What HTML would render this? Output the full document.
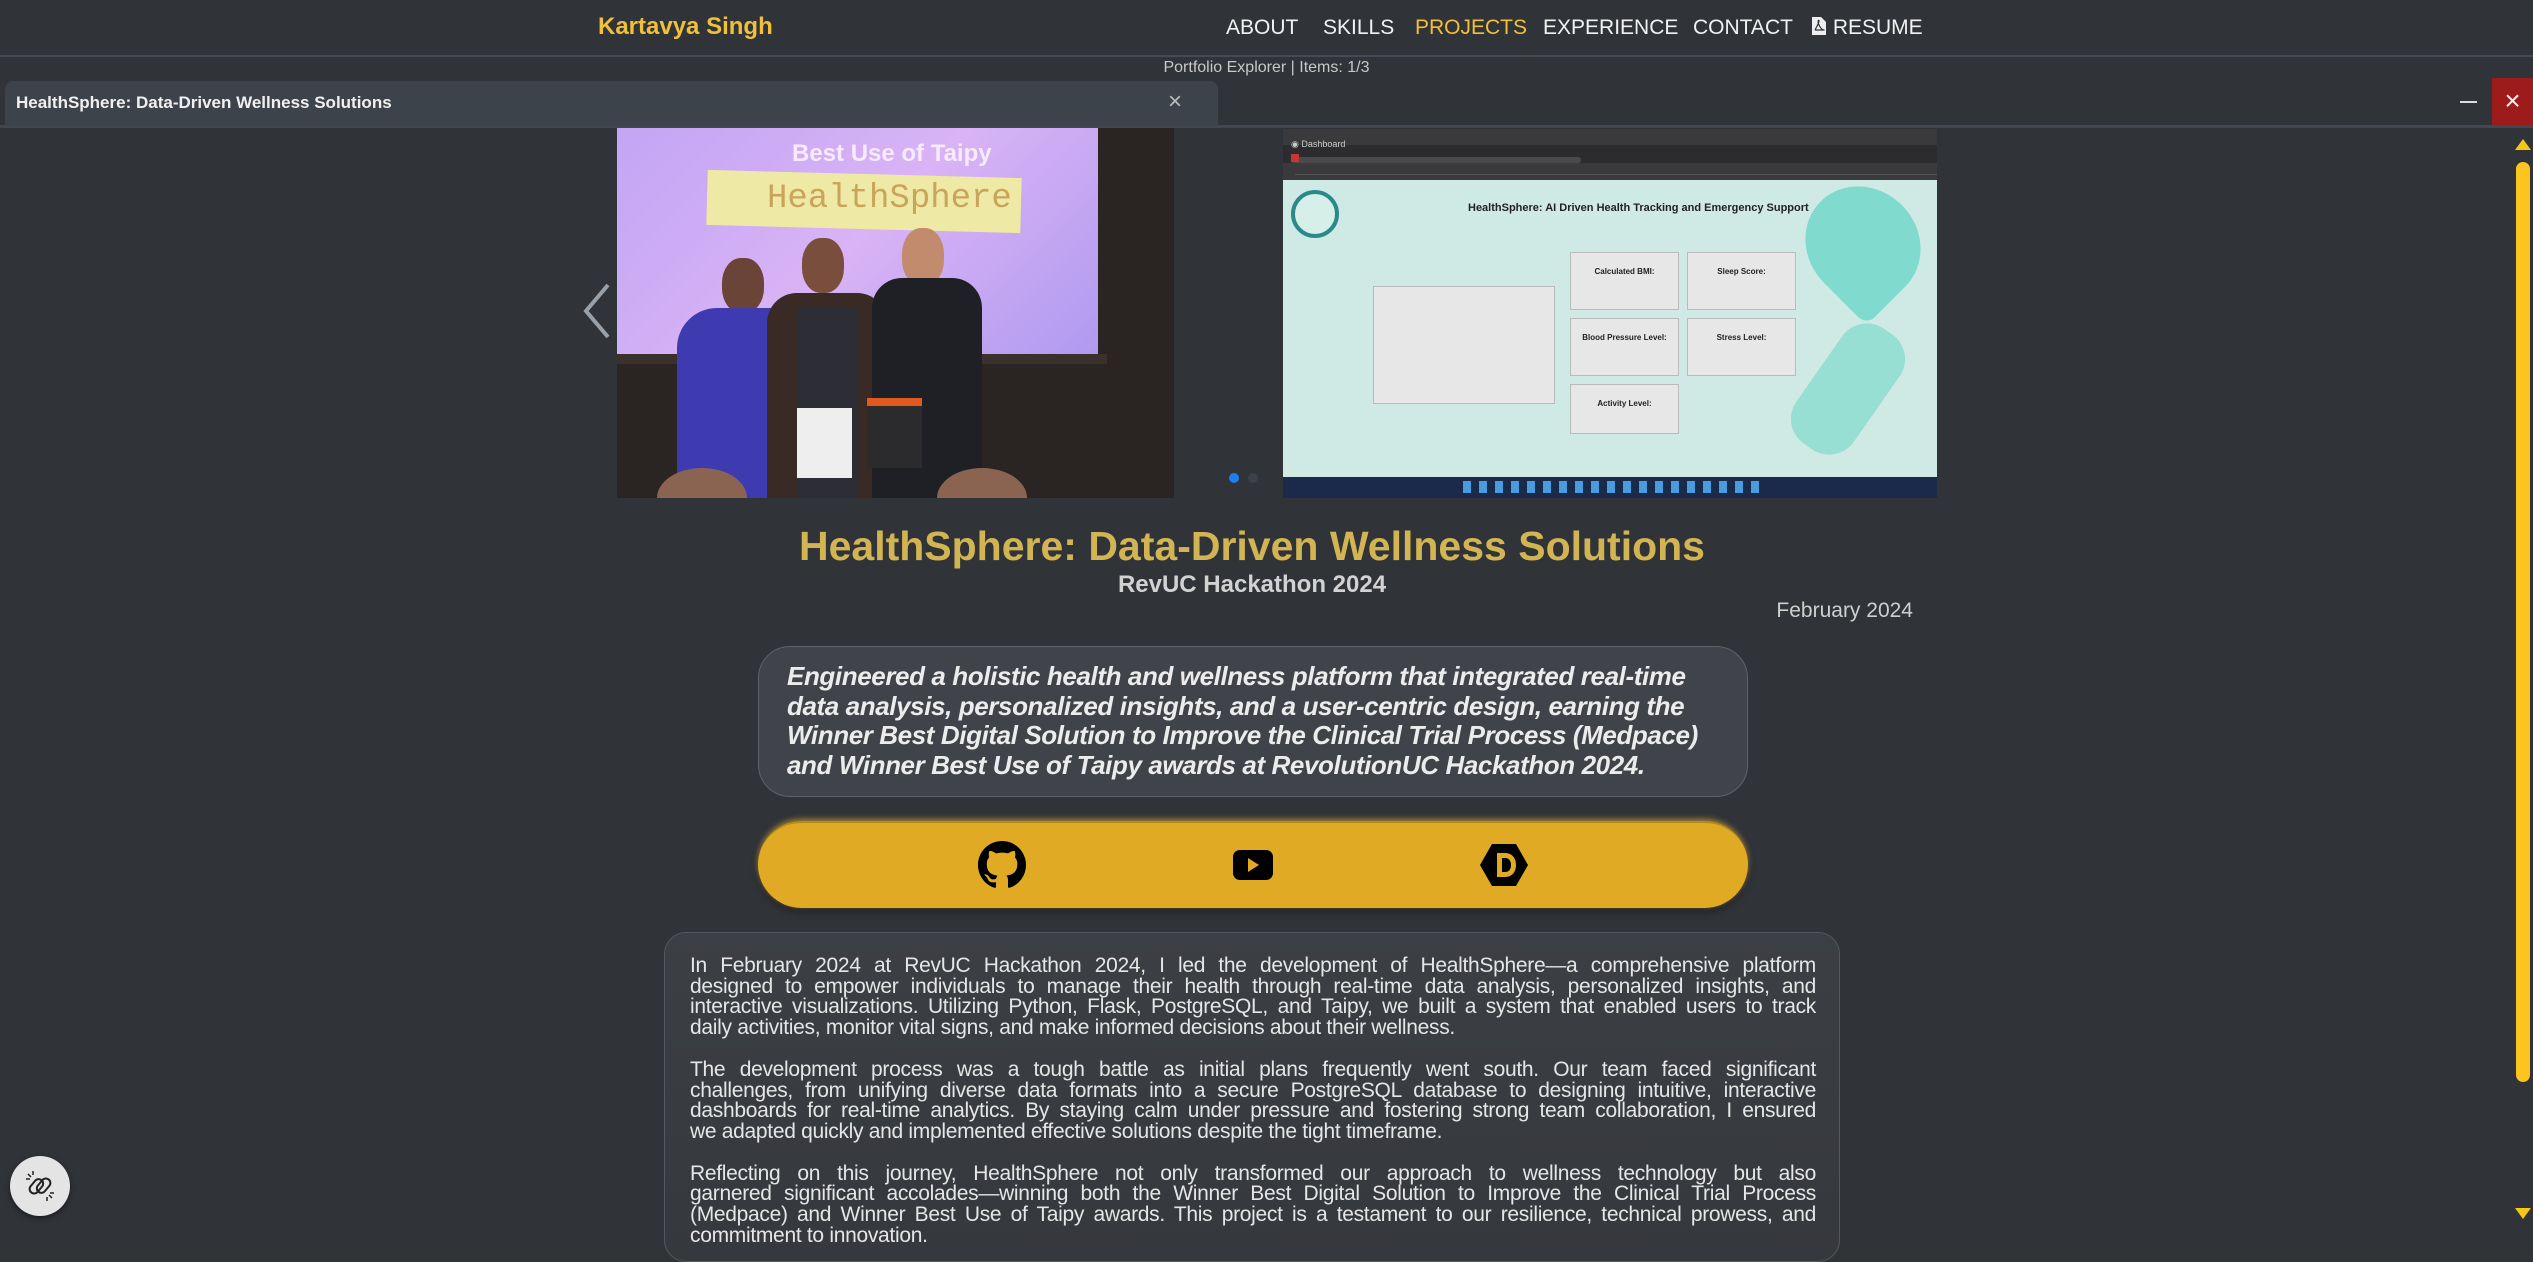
<!DOCTYPE html>
<html><head><meta charset="utf-8"><style>
*{margin:0;padding:0;box-sizing:border-box}
html,body{width:2533px;height:1231px;overflow:hidden;background:#303338;font-family:"Liberation Sans",sans-serif;color:#e8e8e8}
.abs{position:absolute}
.nav a{position:absolute;top:16px;font-size:21px;color:#f2f2f2;text-decoration:none;white-space:nowrap}
.ql{white-space:nowrap}
.desc div{white-space:nowrap;text-align:justify;text-align-last:justify}
.desc div.l{text-align-last:left}
</style></head><body>
<!-- navbar -->
<div class="abs" style="left:0;top:0;width:2533px;height:57px;background:#303338;border-bottom:2px solid #454a55"></div>
<div class="abs" style="left:598px;top:13px;font-size:24px;font-weight:bold;color:#f0c03a">Kartavya Singh</div>
<div class="nav">
<a style="left:1226px">ABOUT</a>
<a style="left:1323px">SKILLS</a>
<a style="left:1415px;color:#f0c03a">PROJECTS</a>
<a style="left:1543px">EXPERIENCE</a>
<a style="left:1693px">CONTACT</a>
<a style="left:1811px"><svg width="16" height="20" viewBox="0 0 16 20" style="vertical-align:-2px"><path d="M1 1h9l5 5v13H1z" fill="#eee"/><path d="M4 14c2-4 4-7 4-9s-2 0 0 4 4 5 5 5-6 0-9 0" stroke="#303338" stroke-width="1.2" fill="none"/></svg> RESUME</a>
</div>
<div class="abs" style="left:0;width:2533px;top:59px;text-align:center;font-size:16px;color:#c8c8c8">Portfolio Explorer | Items: 1/3</div>
<!-- tab bar -->
<div class="abs" style="left:0;top:125px;width:2533px;height:3px;background:#414751"></div>
<div class="abs" style="left:5px;top:81px;width:1213px;height:45px;background:#3d434b;border-radius:8px 8px 0 0"></div>
<div class="abs" style="left:16px;top:93px;font-size:17px;font-weight:bold;color:#f0f0f0">HealthSphere: Data-Driven Wellness Solutions</div>
<div class="abs" style="left:1168px;top:88px;font-size:24px;color:#bbb">×</div>
<div class="abs" style="left:2460px;top:101px;width:17px;height:2px;background:#ddd"></div>
<div class="abs" style="left:2492px;top:78px;width:41px;height:47px;background:#9e1b1b;color:#eee;font-size:28px;text-align:center;line-height:45px">×</div>
<!-- scrollbar -->
<div class="abs" style="left:2515px;top:139px;width:0;height:0;border-left:8px solid transparent;border-right:8px solid transparent;border-bottom:11px solid #f5c518"></div>
<div class="abs" style="left:2516px;top:162px;width:14px;height:920px;background:#fcc41e;border-radius:7px"></div>
<div class="abs" style="left:2515px;top:1208px;width:0;height:0;border-left:8px solid transparent;border-right:8px solid transparent;border-top:11px solid #f5c518"></div>
<!-- left photo -->
<div class="abs" style="left:617px;top:128px;width:557px;height:370px;background:#2a2422;overflow:hidden">
 <div class="abs" style="left:0;top:0;width:481px;height:226px;background:linear-gradient(135deg,#c2a5f5,#d9b3f5 50%,#b09af0)"></div>
 <div class="abs" style="left:0;top:226px;width:490px;height:10px;background:#3a302c"></div>
 <div class="abs" style="left:175px;top:12px;font-size:24px;font-weight:bold;color:#f6eafc">Best Use of Taipy</div>
 <div class="abs" style="left:90px;top:46px;width:314px;height:55px;background:#eeeaa6;transform:rotate(1.5deg)"></div>
 <div class="abs" style="left:150px;top:52px;font-family:'Liberation Mono',monospace;font-size:34px;color:#c9a45a">HealthSphere</div>
 <div class="abs" style="left:105px;top:130px;width:42px;height:55px;border-radius:45%;background:#6a4436"></div>
 <div class="abs" style="left:60px;top:180px;width:135px;height:200px;border-radius:40px 40px 0 0;background:#3e3bb0"></div>
 <div class="abs" style="left:185px;top:110px;width:42px;height:55px;border-radius:45%;background:#7a4e3c"></div>
 <div class="abs" style="left:150px;top:165px;width:120px;height:210px;border-radius:30px 30px 0 0;background:#3a2a26"></div>
 <div class="abs" style="left:180px;top:180px;width:60px;height:190px;background:#2c2d35"></div>
 <div class="abs" style="left:285px;top:100px;width:42px;height:58px;border-radius:45%;background:#c38b6e"></div>
 <div class="abs" style="left:255px;top:150px;width:110px;height:225px;border-radius:30px 30px 0 0;background:#1f2025"></div>
 <div class="abs" style="left:180px;top:280px;width:55px;height:70px;background:#eee"></div>
 <div class="abs" style="left:250px;top:270px;width:55px;height:70px;background:#2b2b2e;border-top:8px solid #e05a20"></div>
 <div class="abs" style="left:40px;top:340px;width:90px;height:60px;border-radius:50%;background:#8a6450"></div>
 <div class="abs" style="left:320px;top:340px;width:90px;height:60px;border-radius:50%;background:#8a6450"></div>
</div>
<!-- prev arrow -->
<svg class="abs" style="left:580px;top:283px" width="34" height="56" viewBox="0 0 34 56"><path d="M28 2L6 28l22 26" stroke="#9aa0a8" stroke-width="4" fill="none"/></svg>
<div class="abs" style="left:1229px;top:473px;width:10px;height:10px;border-radius:50%;background:#1e7ef0"></div>
<div class="abs" style="left:1248px;top:473px;width:10px;height:10px;border-radius:50%;background:#3c4048"></div>
<!-- right screenshot -->
<div class="abs" style="left:1283px;top:129px;width:654px;height:369px;background:#cfe9e5;overflow:hidden">
 <div class="abs" style="left:0;top:0;width:654px;height:51px;background:#3a3a3c"></div>
 <div class="abs" style="left:0;top:16px;width:654px;height:18px;background:#2c2c2e"></div>
 <div class="abs" style="left:12px;top:45px;width:654px;height:1px;background:#555"></div>
 <div class="abs" style="left:8px;top:28px;width:290px;height:6px;background:#4a4a4c;border-radius:3px"></div>
 <div class="abs" style="left:8px;top:10px;font-size:9px;color:#ccc">◉ Dashboard</div>
 <div class="abs" style="left:8px;top:25px;width:8px;height:8px;background:#c33"></div>
 <div class="abs" style="left:8px;top:61px;width:48px;height:48px;border-radius:50%;border:4px solid #2a8a8a;background:#d6efe9"></div>
 <div class="abs" style="left:185px;top:73px;font-size:11px;font-weight:bold;color:#222">HealthSphere: AI Driven Health Tracking and Emergency Support</div>
 <div class="abs" style="left:520px;top:60px;width:120px;height:110px;background:#6cd6c8;border-radius:50% 50% 10% 50%;transform:rotate(45deg);opacity:.8"></div>
 <div class="abs" style="left:530px;top:190px;width:70px;height:140px;background:#7fd8cc;border-radius:30px;transform:rotate(35deg);opacity:.7"></div>
 <div class="abs" style="left:90px;top:157px;width:182px;height:118px;background:#e7e7e7;border:1px solid #bbb"></div>
 <div class="abs" style="left:287px;top:123px;width:109px;height:58px;background:#e7e7e7;border:1px solid #bbb;font-size:8px;text-align:center;padding-top:14px;color:#222"><b>Calculated BMI:</b></div>
 <div class="abs" style="left:404px;top:123px;width:109px;height:58px;background:#e7e7e7;border:1px solid #bbb;font-size:8px;text-align:center;padding-top:14px;color:#222"><b>Sleep Score:</b></div>
 <div class="abs" style="left:287px;top:189px;width:109px;height:58px;background:#e7e7e7;border:1px solid #bbb;font-size:8px;text-align:center;padding-top:14px;color:#222"><b>Blood Pressure Level:</b></div>
 <div class="abs" style="left:404px;top:189px;width:109px;height:58px;background:#e7e7e7;border:1px solid #bbb;font-size:8px;text-align:center;padding-top:14px;color:#222"><b>Stress Level:</b></div>
 <div class="abs" style="left:287px;top:255px;width:109px;height:50px;background:#e7e7e7;border:1px solid #bbb;font-size:8px;text-align:center;padding-top:14px;color:#222"><b>Activity Level:</b></div>
 <div class="abs" style="left:0;top:348px;width:654px;height:21px;background:#1b2a4a"></div>
 <div class="abs" style="left:180px;top:352px;width:300px;height:12px;background:repeating-linear-gradient(90deg,#4a9ae0 0 8px,transparent 8px 16px)"></div>
</div>
<!-- titles -->
<div class="abs" style="left:0;width:2504px;top:523px;text-align:center;font-size:41px;font-weight:bold;color:#d2b552">HealthSphere: Data-Driven Wellness Solutions</div>
<div class="abs" style="left:0;width:2504px;top:571px;text-align:center;font-size:24px;font-weight:bold;color:#d2d2d2">RevUC Hackathon 2024</div>
<div class="abs" style="left:700px;top:599px;width:1213px;text-align:right;font-size:21px;color:#cfcfcf">February 2024</div>
<!-- quote box -->
<div class="abs" style="left:758px;top:646px;width:990px;height:151px;background:#404349;border:1.5px solid #5f6268;border-radius:32px"></div>
<div class="abs" style="left:787px;top:662px;font-size:26px;font-weight:bold;font-style:italic;line-height:29.5px;color:#ececec;letter-spacing:-0.4px">
<div class="ql">Engineered a holistic health and wellness platform that integrated real-time</div>
<div class="ql">data analysis, personalized insights, and a user-centric design, earning the</div>
<div class="ql">Winner Best Digital Solution to Improve the Clinical Trial Process (Medpace)</div>
<div class="ql">and Winner Best Use of Taipy awards at RevolutionUC Hackathon 2024.</div>
</div>
<!-- link bar -->
<div class="abs" style="left:758px;top:821px;width:990px;height:87px;background:#e1aa24;border-radius:44px;box-shadow:0 -2px 6px rgba(240,190,60,.6),0 4px 8px rgba(0,0,0,.35);border-top:2px solid #b98a1a"></div>
<svg class="abs" style="left:978px;top:841px" width="48" height="48" viewBox="0 0 16 16"><path fill="#000" d="M8 0C3.58 0 0 3.58 0 8c0 3.54 2.29 6.53 5.47 7.59.4.07.55-.17.55-.38 0-.19-.01-.82-.01-1.490-2.010.37-2.530-.49-2.690-.94-.09-.23-.48-.94-.82-1.13-.28-.15-.68-.52-.01-.53.63-.01 1.08.58 1.23.82.72 1.21 1.870.87 2.330.66.07-.52.28-.87.51-1.07-1.78-.2-3.64-.89-3.64-3.950 0-.87.31-1.59.82-2.15-.08-.2-.36-1.020.08-2.120 0 0 .67-.21 2.2.82.64-.18 1.32-.27 2-.27.68 0 1.36.09 2 .27 1.53-1.04 2.2-.82 2.2-.82.44 1.1.16 1.92.08 2.12.51.56.82 1.27.82 2.15 0 3.07-1.87 3.75-3.65 3.95.29.25.54.73.54 1.48 0 1.07-.01 1.93-.01 2.2 0 .21.15.46.55.38A8.013 8.013 0 0016 8c0-4.42-3.58-8-8-8z"/></svg>
<svg class="abs" style="left:1232px;top:849px" width="42" height="32" viewBox="0 0 42 32"><rect x="1" y="1" width="40" height="30" rx="7" fill="#000"/><path d="M16 9l11 7-11 7z" fill="#e1aa24"/></svg>
<svg class="abs" style="left:1480px;top:844px" width="48" height="42" viewBox="0 0 48 42"><path d="M12 0h24l12 21-12 21H12L0 21z" fill="#000"/><path d="M17 9h8c7 0 11 5 11 12s-4 12-11 12h-8zM22 14v14h3c4 0 6-3 6-7s-2-7-6-7z" fill="#e1aa24"/></svg>
<!-- description -->
<div class="abs" style="left:664px;top:932px;width:1176px;height:330px;background:linear-gradient(#3c3f44,#35383d);border:1.5px solid #55585e;border-radius:22px"></div>
<div class="abs desc" style="left:690px;top:956px;width:1126px;font-size:21px;line-height:20.7px;color:#e6e6e6;letter-spacing:-0.3px">
<div>In February 2024 at RevUC Hackathon 2024, I led the development of HealthSphere—a comprehensive platform</div>
<div>designed to empower individuals to manage their health through real-time data analysis, personalized insights, and</div>
<div>interactive visualizations. Utilizing Python, Flask, PostgreSQL, and Taipy, we built a system that enabled users to track</div>
<div class="l">daily activities, monitor vital signs, and make informed decisions about their wellness.</div>
<div style="height:21px"></div>
<div>The development process was a tough battle as initial plans frequently went south. Our team faced significant</div>
<div>challenges, from unifying diverse data formats into a secure PostgreSQL database to designing intuitive, interactive</div>
<div>dashboards for real-time analytics. By staying calm under pressure and fostering strong team collaboration, I ensured</div>
<div class="l">we adapted quickly and implemented effective solutions despite the tight timeframe.</div>
<div style="height:21px"></div>
<div>Reflecting on this journey, HealthSphere not only transformed our approach to wellness technology but also</div>
<div>garnered significant accolades—winning both the Winner Best Digital Solution to Improve the Clinical Trial Process</div>
<div>(Medpace) and Winner Best Use of Taipy awards. This project is a testament to our resilience, technical prowess, and</div>
<div class="l">commitment to innovation.</div>
</div>
<!-- floating button -->
<div class="abs" style="left:10px;top:1156px;width:60px;height:60px;border-radius:50%;background:#e4e4e4;box-shadow:0 2px 6px rgba(0,0,0,.5)"></div>
<svg class="abs" style="left:22px;top:1168px" width="36" height="36" viewBox="0 0 36 36" fill="none" stroke="#222" stroke-width="2"><rect x="6" y="14" width="16" height="9" rx="4.5" transform="rotate(-50 14 18)"/><rect x="14" y="13" width="16" height="9" rx="4.5" transform="rotate(-50 22 18)"/><path d="M6 6l3 3M4 11h4M11 3v4M30 30l-3-3M32 25h-4M25 33v-4" stroke-width="1.5"/></svg>
</body></html>
